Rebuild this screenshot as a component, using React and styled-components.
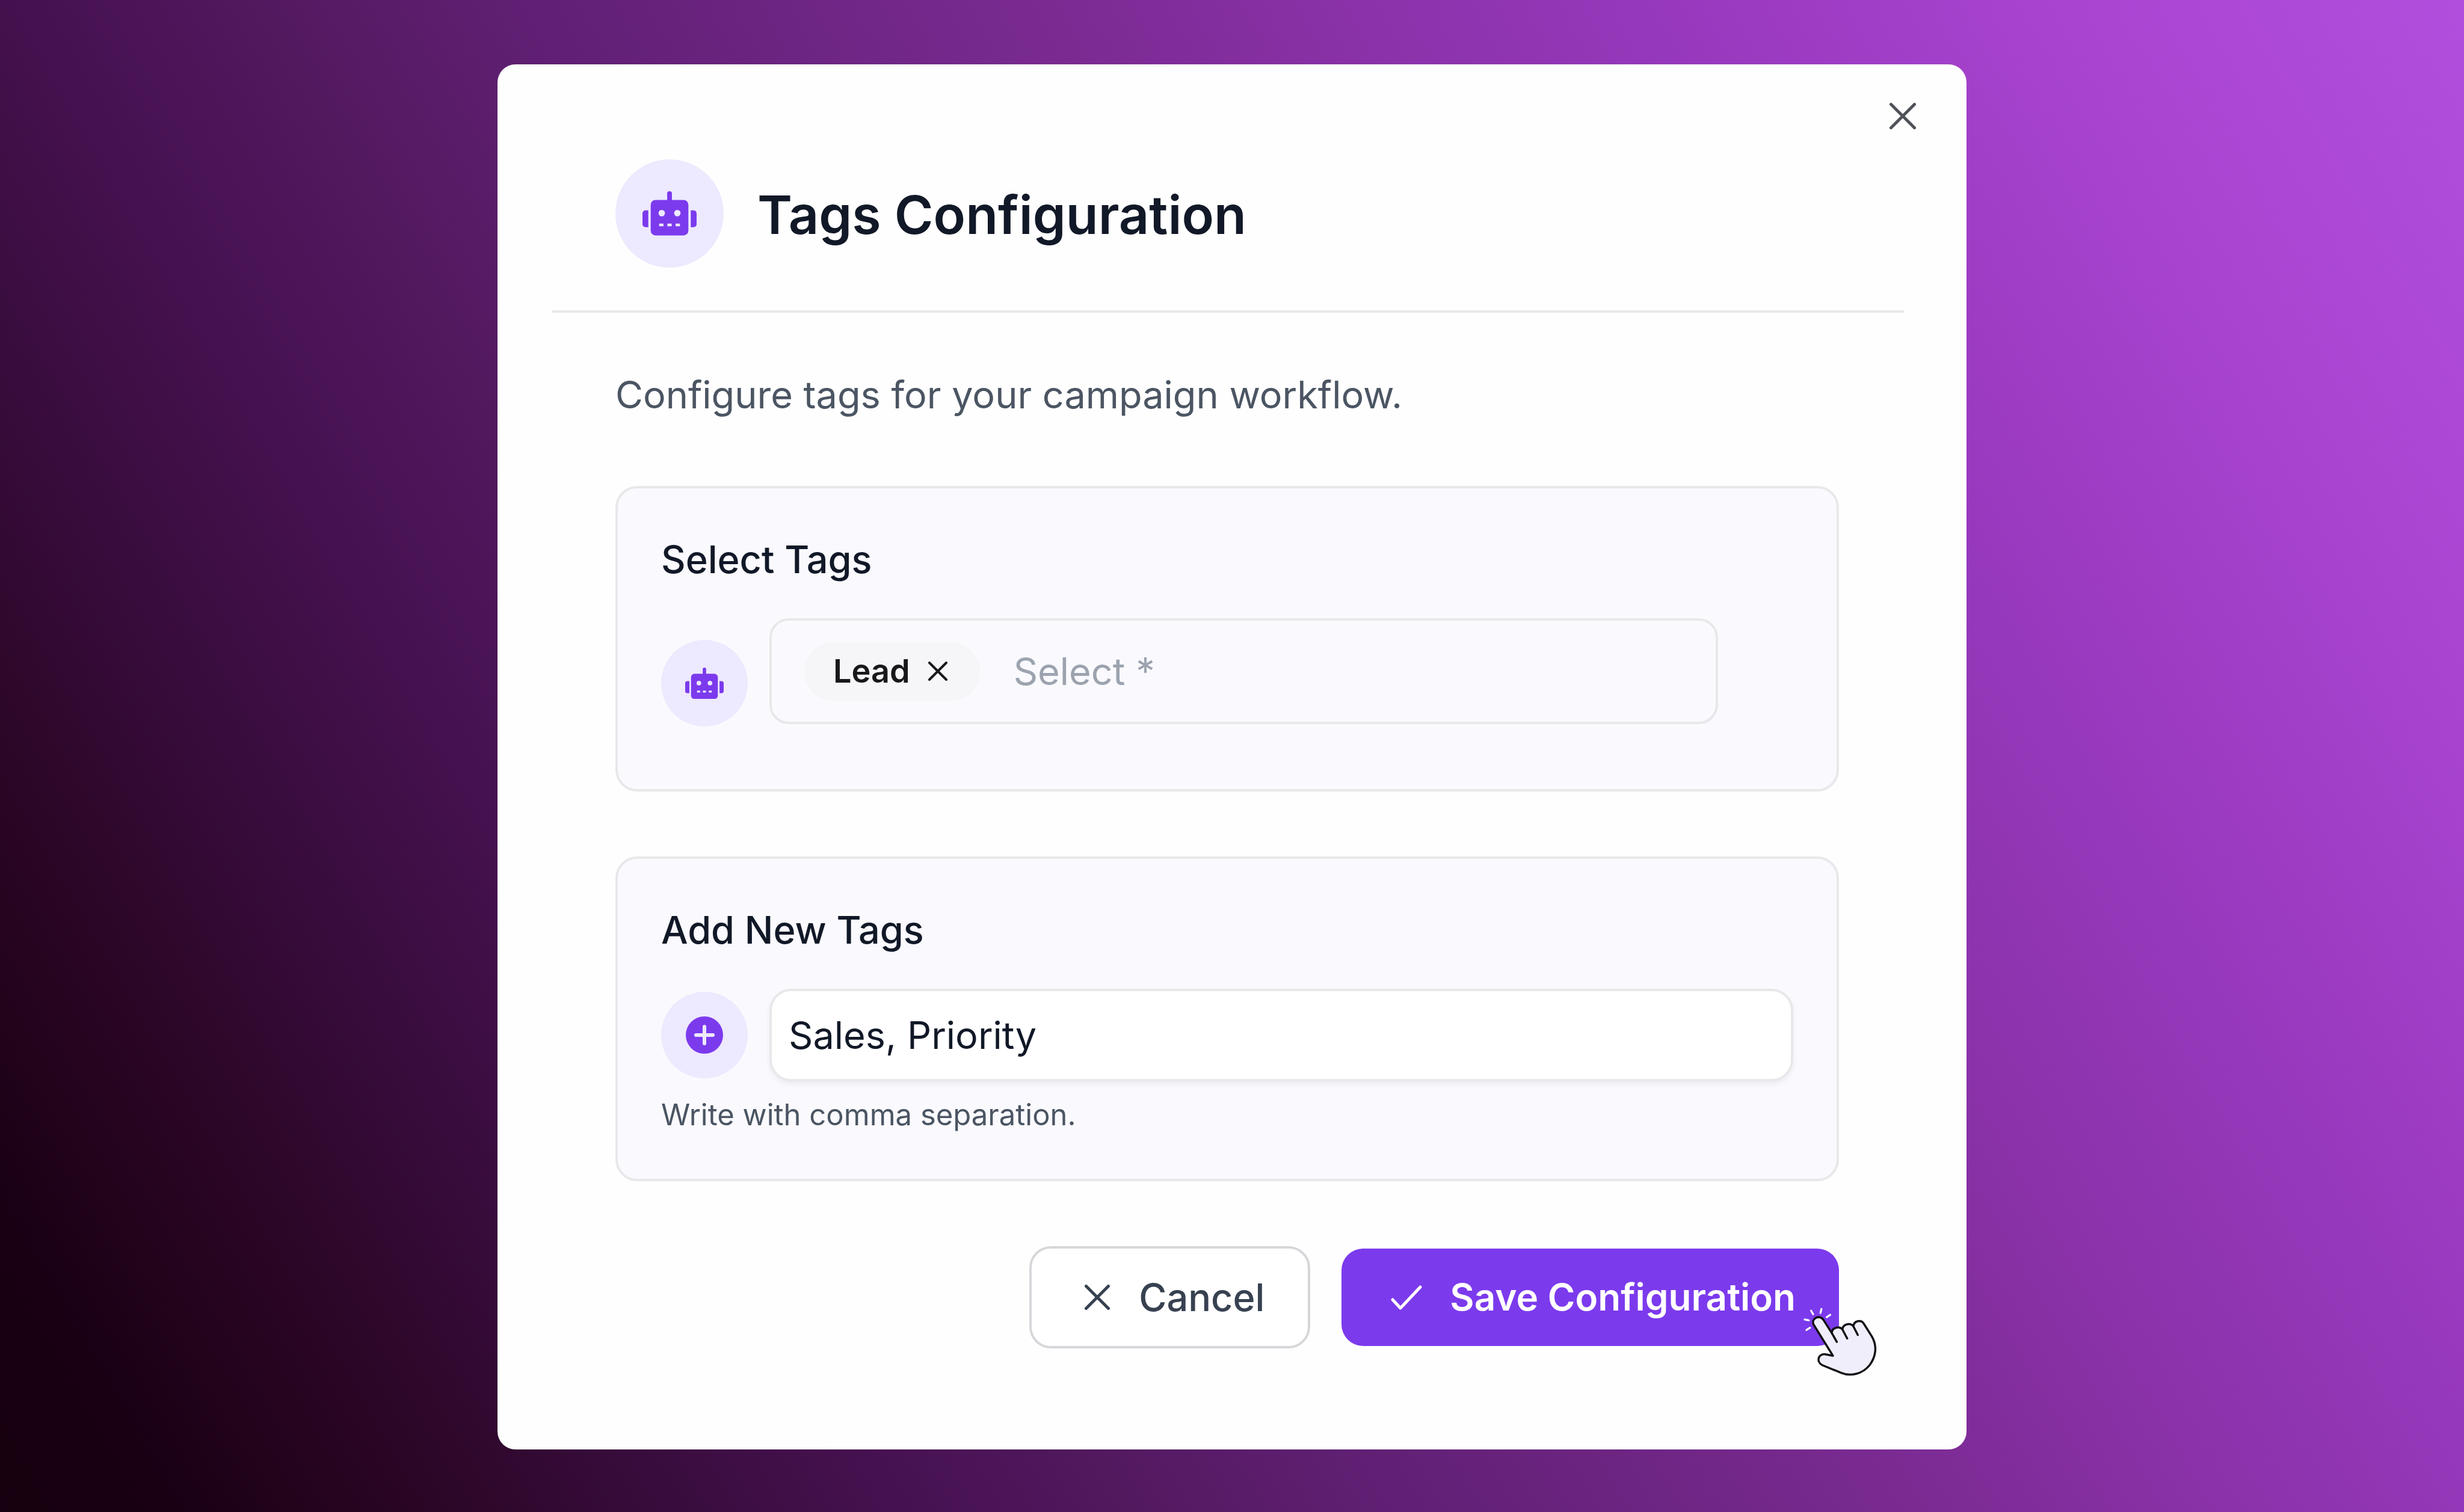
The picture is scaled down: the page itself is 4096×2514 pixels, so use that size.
import React, { useState } from "react";
import styled, { createGlobalStyle } from "styled-components";

const color = {
  violet: "#7c3aed",
  lilac: "#ede9fe",
  ink: "#111827",
  slate: "#374151",
  muted: "#4b5563",
  faint: "#9ca3af",
  line: "#e8e8ea",
  panel: "#fafafe",
};

const GlobalStyle = createGlobalStyle`
  *, *::before, *::after { box-sizing: border-box; }
  html, body { margin: 0; }
  body { font-family: Inter, "Liberation Sans", sans-serif; color: ${color.ink}; }
  h1, h2, p { margin: 0; }
  button, input { font: inherit; color: inherit; }
`;

const Backdrop = styled.main`
  min-height: 100vh;
  display: flex;
  justify-content: center;
  align-items: flex-start;
  padding: 107px 5% 104px;
  background: linear-gradient(
    60deg,
    #17000f 0%,
    #190012 5%,
    #2b0626 13%,
    #380c3c 20%,
    #461150 27%,
    #52195f 34%,
    #5f1f72 41%,
    #7b2b93 58%,
    #8b32aa 67%,
    #9638bb 75%,
    #a13ec7 82%,
    #aa45d2 89%,
    #b24edd 100%
  );
`;

const Dialog = styled.section`
  width: 100%;
  max-width: 2442px;
  display: flex;
  flex-direction: column;
  padding: 64px 104px 168px 90px;
  border-radius: 30px;
  background: #fefefe;
`;

const CloseButton = styled.button`
  align-self: flex-end;
  display: flex;
  padding: 0;
  margin-right: -20px;
  border: 0;
  background: none;
  color: #4f5358;
`;

const Header = styled.header`
  display: flex;
  align-items: center;
  gap: 56px;
  padding: 50px 106px 71px;
  border-bottom: 4px solid #e9e9ea;
`;

const Title = styled.h1`
  padding-top: 4px;
  font-size: 88px;
  line-height: 108px;
  font-weight: 600;
`;

const Body = styled.form`
  display: flex;
  flex-direction: column;
  padding: 88px 108px 0 106px;
`;

const Intro = styled.p`
  margin-bottom: 104px;
  font-size: 63px;
  line-height: 96px;
  color: ${color.muted};
`;

const Panel = styled.section`
  display: flex;
  flex-direction: column;
  padding: 70px 72px ${(p) => p.$bottom}px;
  margin-bottom: 108px;
  border: 4px solid ${color.line};
  border-radius: 36px;
  background: ${color.panel};
`;

const FieldLabel = styled.label`
  margin-bottom: 50px;
  font-size: 63px;
  line-height: 96px;
  font-weight: 500;
`;

const FieldRow = styled.div`
  display: flex;
  align-items: ${(p) => p.$align || "center"};
  gap: 36px;
`;

const Badge = styled.span`
  flex: none;
  display: grid;
  place-items: center;
  width: ${(p) => p.$size}px;
  height: ${(p) => p.$size}px;
  border-radius: 50%;
  background: ${color.lilac};
  color: ${color.violet};
`;

const TagSelect = styled.div`
  flex: 1;
  display: flex;
  align-items: center;
  gap: 56px;
  min-width: 0;
  height: 176px;
  margin: 0 125px 4px 0;
  padding: 0 54px;
  border: 4px solid ${color.line};
  border-radius: 32px;
`;

const Chip = styled.span`
  display: flex;
  align-items: center;
  gap: 30px;
  height: 97px;
  padding: 0 54px 0 48px;
  border-radius: 48px;
  background: #f6f6f8;
  color: #18181b;
  font-size: 54px;
  line-height: 64px;
  font-weight: 600;
`;

const ChipRemove = styled.button`
  display: flex;
  padding: 0;
  border: 0;
  background: none;
`;

const TagSearch = styled.input`
  flex: 1;
  min-width: 0;
  padding: 0;
  border: 0;
  outline: 0;
  background: none;
  font-size: 63px;
  line-height: 96px;
  &::placeholder { color: ${color.faint}; opacity: 1; }
`;

const TextInput = styled.input`
  flex: 1;
  min-width: 0;
  height: 154px;
  padding: 0 28px;
  border: 4px solid ${color.line};
  border-radius: 36px;
  outline: 0;
  background: #fff;
  box-shadow: 0 5px 8px rgba(24, 24, 50, 0.06);
  font-size: 63px;
  line-height: 96px;
`;

const Hint = styled.p`
  margin-top: 20px;
  font-size: 49px;
  line-height: 72px;
  color: ${color.muted};
`;

const Actions = styled.footer`
  display: flex;
  justify-content: flex-end;
  align-items: center;
  gap: 52px;
`;

const Button = styled.button`
  position: relative;
  display: flex;
  align-items: center;
  gap: ${(p) => (p.$primary ? 46 : 48)}px;
  height: ${(p) => (p.$primary ? 162 : 170)}px;
  padding: ${(p) => (p.$primary ? "0 72px 0 82px" : "0 72px 0 88px")};
  border: ${(p) => (p.$primary ? "0" : "4px solid #d6d7da")};
  border-radius: 36px;
  background: ${(p) => (p.$primary ? color.violet : "#fff")};
  color: ${(p) => (p.$primary ? "#fff" : color.slate)};
  font-size: ${(p) => (p.$primary ? 62 : 63)}px;
  line-height: 96px;
  font-weight: ${(p) => (p.$primary ? 600 : 500)};
  white-space: nowrap;
`;

const Pointer = styled.svg`
  position: absolute;
  right: -103px;
  top: 62px;
  width: 193px;
  height: 178px;
  pointer-events: none;
`;

function Robot({ size }) {
  return (
    <svg width={size} height={size * 0.82} viewBox="0 0 25 20.5" fill="currentColor" aria-hidden="true">
      <rect x="11.4" y="0" width="2.200" height="5" rx="1" />
      <path
        fillRule="evenodd"
        d="M6 4h13a2.200 2.200 0 0 1 2.200 2.200v12A2.200 2.200 0 0 1 19 20.400H6a2.200 2.200 0 0 1-2.200-2.200v-12A2.200 2.200 0 0 1 6 4ZM8.900 8.600a1.500 1.500 0 1 0 0 3 1.500 1.500 0 0 0 0-3ZM16.100 8.600a1.500 1.500 0 1 0 0 3 1.500 1.500 0 0 0 0-3ZM7.700 14.900v1.300h2v-1.300ZM11.500 14.900v1.300h2v-1.300ZM15.300 14.900v1.300h2v-1.300Z"
      />
      <path d="M2.700 8.800v7.800H1.400A1.400 1.400 0 0 1 0 15.200v-5a1.400 1.400 0 0 1 1.400-1.400ZM22.300 8.800v7.800h1.300A1.400 1.400 0 0 0 25 15.200v-5a1.400 1.400 0 0 0-1.400-1.400Z" />
    </svg>
  );
}

function Cross({ size, stroke }) {
  const near = stroke / 2;
  const far = size - near;
  return (
    <svg width={size} height={size} viewBox={`0 0 ${size} ${size}`} fill="none" stroke="currentColor" strokeWidth={stroke} strokeLinecap="round" aria-hidden="true">
      <path d={`M${near} ${near}L${far} ${far}M${far} ${near}L${near} ${far}`} />
    </svg>
  );
}

function PlusDisc() {
  return (
    <svg width="62" height="62" viewBox="0 0 62 62" aria-hidden="true">
      <circle cx="31" cy="31" r="31" fill="currentColor" />
      <path d="M31 17v28M17 31h28" stroke={color.lilac} strokeWidth="6" strokeLinecap="round" />
    </svg>
  );
}

function Check() {
  return (
    <svg width="52" height="44" viewBox="0 0 52 44" fill="none" stroke="currentColor" strokeWidth="5" strokeLinecap="round" strokeLinejoin="round" aria-hidden="true">
      <path d="M3 26L16 40L49 5" />
    </svg>
  );
}

function Hand() {
  return (
    <Pointer viewBox="0 0 778 720" fill="none" strokeLinecap="round" strokeLinejoin="round" aria-hidden="true">
      <path d="M175 167L189 191M245 155L238 182M304 195L280 211M132 226L160 232M168 282L144 297" stroke="#fff" strokeWidth="13" />
      <path
        d="M322 470L193 262C172 222 230 190 257 227L315 318C312 284 362 266 386 293C388 258 438 244 460 273C462 234 512 224 530 255L585 342C622 408 610 478 568 534C520 594 440 610 380 586L252 534C204 508 226 450 276 461Z"
        fill="#f1eefb"
        stroke="#111014"
        strokeWidth="14"
      />
      <path d="M315 318L348 377M386 293L418 354M460 273L489 330" stroke="#111014" strokeWidth="14" />
    </Pointer>
  );
}

export default function App() {
  const [tags, setTags] = useState(["Lead"]);
  const [newTags, setNewTags] = useState("Sales, Priority");

  return (
    <>
      <GlobalStyle />
      <Backdrop>
        <Dialog role="dialog" aria-labelledby="dialog-title">
          <CloseButton type="button" aria-label="Close">
            <Cross size={44} stroke={5} />
          </CloseButton>
          <Header>
            <Badge $size={180}>
              <Robot size={90} />
            </Badge>
            <Title id="dialog-title">Tags Configuration</Title>
          </Header>
          <Body onSubmit={(e) => e.preventDefault()}>
            <Intro>Configure tags for your campaign workflow.</Intro>
            <Panel $bottom={104}>
              <FieldLabel htmlFor="tag-search">Select Tags</FieldLabel>
              <FieldRow $align="flex-end">
                <Badge $size={144}>
                  <Robot size={64} />
                </Badge>
                <TagSelect>
                  {tags.map((tag) => (
                    <Chip key={tag}>
                      {tag}
                      <ChipRemove
                        type="button"
                        aria-label={`Remove ${tag}`}
                        onClick={() => setTags(tags.filter((t) => t !== tag))}
                      >
                        <Cross size={32} stroke={4} />
                      </ChipRemove>
                    </Chip>
                  ))}
                  <TagSearch id="tag-search" placeholder="Select *" />
                </TagSelect>
              </FieldRow>
            </Panel>
            <Panel $bottom={70}>
              <FieldLabel htmlFor="new-tags">Add New Tags</FieldLabel>
              <FieldRow>
                <Badge $size={144}>
                  <PlusDisc />
                </Badge>
                <TextInput
                  id="new-tags"
                  value={newTags}
                  onChange={(e) => setNewTags(e.target.value)}
                  aria-describedby="new-tags-hint"
                />
              </FieldRow>
              <Hint id="new-tags-hint">Write with comma separation.</Hint>
            </Panel>
            <Actions>
              <Button type="button">
                <Cross size={42} stroke={5} />
                Cancel
              </Button>
              <Button type="submit" $primary>
                <Check />
                Save Configuration
                <Hand />
              </Button>
            </Actions>
          </Body>
        </Dialog>
      </Backdrop>
    </>
  );
}
